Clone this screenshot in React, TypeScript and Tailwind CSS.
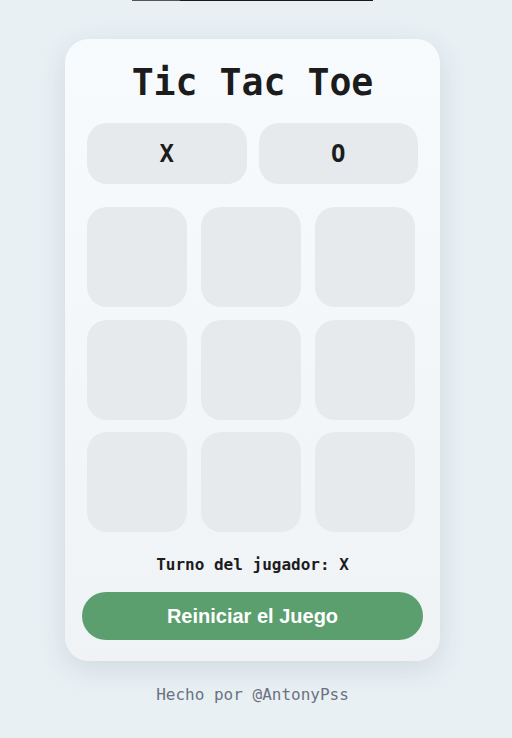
export default function App() {
  const cells = Array.from({ length: 9 });
  return (
    <div className="min-h-[738px] w-full bg-[#e8f0f4] flex flex-col" style={{ fontFamily: '"DejaVu Sans Mono", monospace' }}>
      <div className="w-[505px] flex flex-col items-center">
        <div className="flex h-px w-[241px]">
          <div className="w-[48px] bg-[#555]" />
          <div className="flex-1 bg-[#1a1a1a]" />
        </div>
        <div className="mt-[38px] w-[375px] rounded-[24px] bg-gradient-to-b from-[#f8fbfd] to-[#eff3f6] shadow-[0_8px_28px_rgba(40,60,80,0.12)] px-[22px] pt-[23px] pb-[21px] flex flex-col">
          <h1 className="h-[42px] leading-[42px] text-center text-[36.5px] font-bold text-[#1c1c1c]">Tic Tac Toe</h1>
          <div className="mt-[19px] grid grid-cols-2 gap-x-[12px]">
            <div className="h-[61px] rounded-[20px] bg-[#e7eaed] flex items-center justify-center text-[24px] font-bold text-[#1c1c1c]">X</div>
            <div className="h-[61px] rounded-[20px] bg-[#e7eaed] flex items-center justify-center text-[24px] font-bold text-[#1c1c1c]">O</div>
          </div>
          <div className="mt-[23px] grid grid-cols-[100px_100px_100px] gap-x-[14px] gap-y-[12.5px] justify-start">
            {cells.map((_, i) => (
              <div key={i} className="h-[100px] w-[100px] rounded-[20px] bg-[#e7eaed]" />
            ))}
          </div>
          <p className="mt-[21px] text-center text-[16px] leading-[24px] font-bold text-[#1c1c1c]">Turno del jugador: X</p>
          <button className="mt-[15px] -mx-[5px] h-[48px] rounded-[24px] bg-[#5b9f6f] text-white text-[20px] font-bold" style={{ fontFamily: '"Liberation Sans", Arial, sans-serif' }}>
            Reiniciar el Juego
          </button>
        </div>
        <p className="mt-[22px] text-[16px] leading-[24px] text-[#6b7280]">Hecho por @AntonyPss</p>
      </div>
    </div>
  );
}
